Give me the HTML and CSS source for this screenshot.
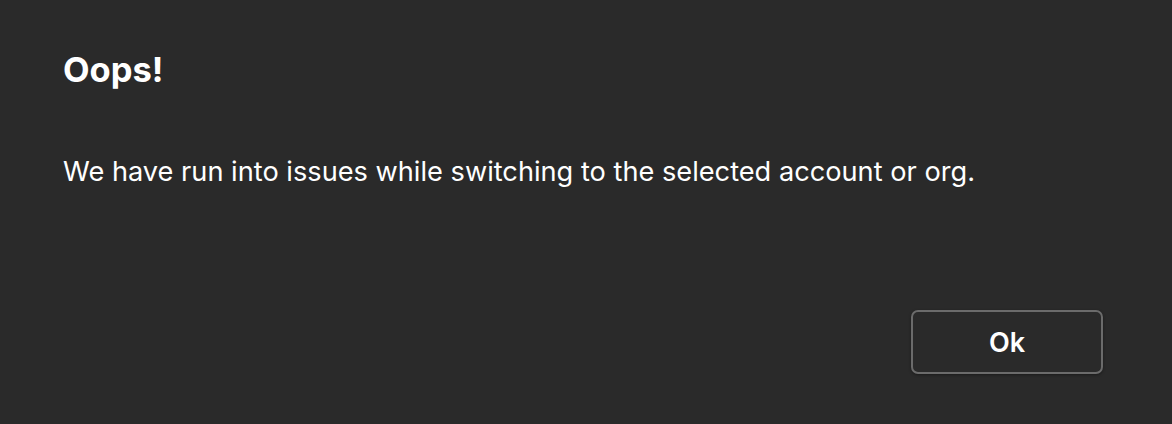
FILE: index.html
```html
<!DOCTYPE html>
<html>
<head>
<meta charset="utf-8">
<link rel="stylesheet" href="styles.css">
</head>
<body>
<div class="dialog">
  <h1 class="title">Oops!</h1>
  <p class="message">We have run into issues while switching to the selected account or org.</p>
  <div class="actions">
    <button class="btn">Ok</button>
  </div>
</div>
</body>
</html>
```
FILE: styles.css
```css
html, body {
  margin: 0;
  padding: 0;
  background: #2a2a2a;
  width: 1172px;
  height: 424px;
  overflow: hidden;
}
.dialog {
  box-sizing: border-box;
  height: 424px;
  padding: 48px 69px 0 63px;
  display: flex;
  flex-direction: column;
  font-family: Inter, "Liberation Sans", sans-serif;
  color: #ffffff;
}
.title {
  margin: 0;
  font-size: 34.5px;
  font-weight: 700;
  line-height: 44px;
}
.message {
  margin: 60px 0 0 0;
  font-size: 27.2px;
  font-weight: 400;
  line-height: 40px;
}
.actions {
  display: flex;
  justify-content: flex-end;
  margin-top: 118px;
}
.btn {
  width: 192px;
  height: 64px;
  background: #2a2a2a;
  border: 2px solid #6b6b6b;
  border-radius: 7px;
  color: #ffffff;
  font-family: Inter, "Liberation Sans", sans-serif;
  font-size: 27px;
  font-weight: 600;
  box-shadow: 0 1px 3px rgba(0,0,0,0.4);
}
```
